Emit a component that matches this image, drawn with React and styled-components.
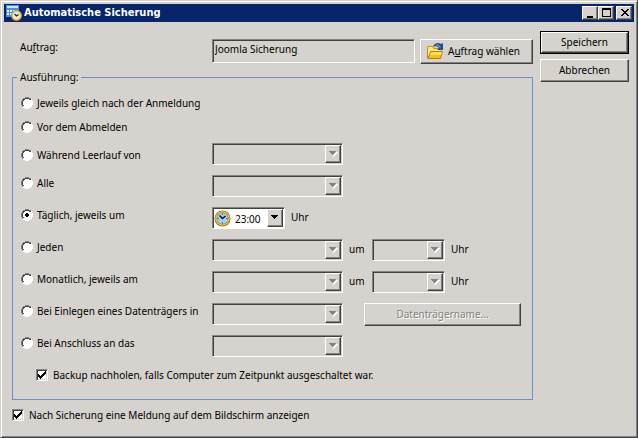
import { useId, useState } from "react"
import styled, { createGlobalStyle } from "styled-components"

const face = "#d6d3ce"
const shadow = "#848284"
const dark = "#424142"

const rows = [
  { id: "login", label: "Jeweils gleich nach der Anmeldung" },
  { id: "logout", label: "Vor dem Abmelden" },
  { id: "idle", label: "Während Leerlauf von", field: "list", first: true },
  { id: "every", label: "Alle", field: "list" },
  { id: "daily", label: "Täglich, jeweils um", field: "clock" },
  { id: "weekday", label: "Jeden", field: "list", time: true },
  { id: "monthly", label: "Monatlich, jeweils am", field: "list", time: true },
  { id: "insert", label: "Bei Einlegen eines Datenträgers in", field: "list", volume: true },
  { id: "connect", label: "Bei Anschluss an das", field: "list" },
]

const App = () => {
  const [mode, setMode] = useState("daily")

  return (
    <>
      <GlobalStyle />
      <Dialog role="dialog" aria-labelledby="dialog-title">
        <TitleBar>
          <ScheduleIcon />
          <Title id="dialog-title">Automatische Sicherung</Title>
          <CaptionButtons>
            <CaptionButton type="button" aria-label="Minimieren">
              <Glyph><path d="M3 9h6v2H3z" /></Glyph>
            </CaptionButton>
            <CaptionButton type="button" aria-label="Maximieren">
              <Glyph><path fillRule="evenodd" d="M2 1h9v9H2zM3 3v6h7V3z" /></Glyph>
            </CaptionButton>
            <CaptionButton type="button" aria-label="Schließen" $apart>
              <Glyph>
                <path d="M3 2h2v1H3zM9 2h2v1H9zM4 3h2v1H4zM8 3h2v1H8zM5 4h4v1H5zM6 5h2v1H6zM5 6h4v1H5zM4 7h2v1H4zM8 7h2v1H8zM3 8h2v1H3zM9 8h2v1H9z" />
              </Glyph>
            </CaptionButton>
          </CaptionButtons>
        </TitleBar>

        <Body>
          <Main>
            <JobRow>
              <JobLabel htmlFor="job">Au<u>f</u>trag:</JobLabel>
              <JobField id="job" type="text" readOnly value="Joomla Sicherung" />
              <JobButton type="button">
                <FolderIcon />
                <span>A<u>u</u>ftrag wählen</span>
              </JobButton>
            </JobRow>

            <Group>
              <Legend>Ausführung:</Legend>
              {rows.map((row) => (
                <Row key={row.id} $short={!row.field}>
                  <Option $first={row.first}>
                    <Radio
                      name="mode"
                      checked={mode === row.id}
                      onChange={() => setMode(row.id)}
                    />
                    <span>{row.label}</span>
                  </Option>
                  {row.field === "list" && <Combo label={row.label} disabled />}
                  {row.field === "clock" && (
                    <>
                      <Combo label="Uhrzeit" value="23:00" small />
                      <Unit>Uhr</Unit>
                    </>
                  )}
                  {row.time && (
                    <>
                      <Unit $wide>um</Unit>
                      <Combo label="Uhrzeit" disabled small />
                      <Unit>Uhr</Unit>
                    </>
                  )}
                  {row.volume && <VolumeButton type="button" disabled>Datenträgername...</VolumeButton>}
                </Row>
              ))}
              <CheckRow $inset>
                <Check />
                <span>Backup nachholen, falls Computer zum Zeitpunkt ausgeschaltet war.</span>
              </CheckRow>
            </Group>

            <CheckRow>
              <Check />
              <span>Nach Sicherung eine Meldung auf dem Bildschirm anzeigen</span>
            </CheckRow>
          </Main>

          <Actions>
            <DefaultFrame>
              <PushButton type="submit">Speichern</PushButton>
            </DefaultFrame>
            <PushButton type="button">Abbrechen</PushButton>
          </Actions>
        </Body>
      </Dialog>
    </>
  )
}

const Glyph = ({ children }) => (
  <svg width="12" height="12" viewBox="0 0 12 12" shapeRendering="crispEdges" aria-hidden="true">
    {children}
  </svg>
)

const Combo = ({ label, value, small, disabled }) => {
  const id = useId()
  return (
    <ComboFrame $small={small} $disabled={disabled}>
      {value && <ComboIcon><ClockIcon /></ComboIcon>}
      <ComboSelect id={id} aria-label={label} disabled={disabled} $icon={!!value}>
        <option>{value}</option>
      </ComboSelect>
      <ComboArrow aria-hidden="true">
        <svg width="9" height="6" viewBox="0 0 9 6" shapeRendering="crispEdges">
          {disabled && <path fill="#fff" d="M7 1h2v1H8v1H7v1H6v1H5v1H4V4z" />}
          <path fill={disabled ? shadow : "#000"} d="M0 0h7v1H6v1H5v1H4v1H3V3H2V2H1V1H0z" />
        </svg>
      </ComboArrow>
    </ComboFrame>
  )
}

const Radio = ({ checked, ...rest }) => (
  <Tick>
    <BareInput type="radio" checked={checked} {...rest} />
    <svg width="12" height="12" viewBox="0 0 12 12" shapeRendering="crispEdges" aria-hidden="true">
      <path fill="#fff" d="M4 1h4v1h2v2h1v4h-1v2H8v1H4v-1H2V8H1V4h1V2h2z" />
      <path fill={shadow} d="M4 0h4v1H4zM2 1h2v1H2zM8 1h2v1H8zM1 2h1v2H1zM0 4h1v4H0zM1 8h1v2H1z" />
      <path fill={dark} d="M4 1h4v1H4zM2 2h2v1H2zM8 2h2v1H8zM2 3h1v1H2zM1 4h1v4H1zM2 8h1v1H2z" />
      <path fill="#fff" d="M10 2h1v2h-1zM11 4h1v4h-1zM10 8h1v2h-1zM8 10h2v1H8zM4 11h4v1H4zM2 10h2v1H2z" />
      {checked && <path d="M5 4h2v1h1v2H7v1H5V7H4V5h1z" />}
    </svg>
  </Tick>
)

const Check = () => {
  const [on, setOn] = useState(true)
  return (
    <Tick $box>
      <BareInput type="checkbox" checked={on} onChange={() => setOn(!on)} />
      {on && (
        <svg width="8" height="8" viewBox="0 0 8 8" shapeRendering="crispEdges" aria-hidden="true">
          <path d="M7 0h1v3H7v1H6v1H5v1H4v1H3v1H2V7H1V6H0V3h1v1h1v1h1V4h1V3h1V2h1V1h1z" />
        </svg>
      )}
    </Tick>
  )
}

const ClockIcon = () => (
  <svg width="17" height="17" viewBox="0 0 17 17" aria-hidden="true">
    <circle cx="8.5" cy="8.5" r="8" fill="#a5712a" />
    <circle cx="8.5" cy="8.5" r="7.2" fill="#f7c331" />
    <circle cx="8.5" cy="8.5" r="5.9" fill="#8c7a45" />
    <circle cx="8.5" cy="8.5" r="5.4" fill="#a5d3f7" />
    <path fill="#4a7dbd" d="M8 3h1v2H8zM8 12h1v2H8zM3 8h2v1H3zM12 8h2v1h-2z" />
    <path d="M5.5 5.5l3 3 3-2.500" fill="none" stroke="#101828" strokeWidth="1.600" />
  </svg>
)

const ScheduleIcon = () => (
  <svg width="16" height="16" viewBox="0 0 16 16" aria-hidden="true">
    <path fill="#4a8ee7" d="M0 0h13v12H0z" />
    <path fill="#c6e3ff" d="M1 1h11v2H1z" />
    <path fill="#e7f3ff" d="M1 5h2v2H1zM4 5h2v2H4zM7 5h2v2H7zM10 5h2v2h-2zM1 8h2v2H1zM4 8h2v2H4z" />
    <circle cx="10.500" cy="10.500" r="5.500" fill="#a5712a" />
    <circle cx="10.500" cy="10.500" r="4.900" fill="#ffc331" />
    <circle cx="10.500" cy="10.500" r="3.500" fill="#dfeff7" />
    <path d="M8.500 9l2 2 2-1.500" fill="none" stroke="#18284a" strokeWidth="1.300" />
  </svg>
)

const FolderIcon = () => (
  <svg width="16" height="16" viewBox="0 0 16 16" aria-hidden="true">
    <path fill="#c69218" d="M0 4l1-1h4l2 2h6v9l-1 2H1l-1-1z" />
    <path fill="#ffe77b" d="M1 4h4l2 2h6v3H4l-3 5z" />
    <path fill="#fbbd18" stroke="#b57d10" d="M1 15.500L3.500 8.500h12l-2 7z" />
    <path fill="#ffe25a" d="M4 9h11l-1 3H3z" />
    <path fill="#28498c" d="M6 4c1-4 5-5 8-3l2-1v7h-6l2-2c-2-2-4-2-6-1z" />
    <path fill="#5a8ece" d="M8 2c2-1 3-1 5 1l1 1-1 1c-2-2-3-2-5-3z" />
  </svg>
)

const GlobalStyle = createGlobalStyle`
  * {
    box-sizing: border-box;
  }
  body {
    margin: 0;
    background: ${face};
  }
  body, button, input, select {
    font-family: "Noto Sans", Tahoma, sans-serif;
    font-size: 10px;
    line-height: 16px;
    color: #000;
  }
`

const Dialog = styled.main`
  min-height: 100vh;
  padding: 2px;
  background: ${face};
  border: 1px solid;
  border-color: ${face} ${dark} ${dark} ${face};
  box-shadow: inset 1px 1px #fff, inset -1px -1px ${shadow};
`

const TitleBar = styled.header`
  display: flex;
  align-items: center;
  gap: 2px;
  height: 18px;
  margin: 1px;
  padding: 0 2px;
  background: #08246b;
`

const Title = styled.h1`
  flex: 1;
  margin: 0;
  font-family: "DejaVu Sans Condensed", "DejaVu Sans", sans-serif;
  font-size: 11px;
  line-height: 16px;
  color: #fff;
`

const CaptionButtons = styled.div`
  display: flex;
`

const CaptionButton = styled.button`
  display: flex;
  width: 16px;
  height: 14px;
  margin-left: ${({ $apart }) => ($apart ? "2px" : "0")};
  padding: 0 0 0 1px;
  background: ${face};
  border: 1px solid;
  border-color: #fff ${dark} ${dark} #fff;
  box-shadow: inset -1px -1px ${shadow};
`

const Body = styled.div`
  display: flex;
  gap: 7px;
  padding: 8px 6px 10px 9px;
`

const Main = styled.div`
  flex: 1;
`

const JobRow = styled.div`
  display: flex;
  align-items: flex-start;
  padding: 8px 0 5px 8px;
`

const JobLabel = styled.label`
  width: 192px;
`

const JobField = styled.input`
  flex: 1;
  min-width: 0;
  height: 24px;
  margin-right: 5px;
  padding: 0 2px 4px;
  background: ${face};
  border: 1px solid;
  border-color: ${shadow} #fff #fff ${shadow};
  border-radius: 0;
  box-shadow: inset 1px 1px ${dark};
  outline: none;
`

const PushButton = styled.button`
  display: flex;
  align-items: center;
  justify-content: center;
  width: 100%;
  height: 23px;
  padding: 0 0 1px;
  background: ${face};
  border: 1px solid;
  border-color: #fff ${dark} ${dark} #fff;
  box-shadow: inset -1px -1px ${shadow};

  &:disabled {
    color: ${shadow};
    text-shadow: 1px 1px #fff;
  }
`

const JobButton = styled(PushButton)`
  justify-content: flex-start;
  gap: 5px;
  width: 113px;
  height: 25px;
  padding-left: 6px;
`

const VolumeButton = styled(PushButton)`
  width: 157px;
  margin-left: 21px;
`

const Group = styled.fieldset`
  min-width: 0;
  margin: 0 0 7px;
  padding: 10px 8px 16px;
  border: 1px solid #6392ce;
`

const Legend = styled.legend`
  margin-left: -4px;
  padding: 0 3px;
  line-height: 16px;
  height: 16px;
`

const Row = styled.div`
  display: flex;
  align-items: flex-start;
  height: ${({ $short }) => ($short ? "24px" : "32px")};
`

const Option = styled.label`
  display: flex;
  align-items: center;
  gap: 4px;
  width: 191px;
  height: ${({ $first }) => ($first ? "24px" : "16px")};
  white-space: nowrap;
`

const Unit = styled.span`
  width: ${({ $wide }) => ($wide ? "29px" : "auto")};
  padding: 2px 0 0 6px;
`

const Tick = styled.span`
  display: grid;
  place-items: center;
  width: 12px;
  height: 12px;

  > * {
    grid-area: 1 / 1;
  }
  svg {
    pointer-events: none;
  }

  ${({ $box }) => $box && `
    background: #fff;
    border: 1px solid;
    border-color: ${shadow} #fff #fff ${shadow};
    box-shadow: inset 1px 1px ${dark}, inset -1px -1px ${face};
  `}
`

const BareInput = styled.input`
  appearance: none;
  width: 100%;
  height: 100%;
  margin: 0;
`

const CheckRow = styled.label`
  display: flex;
  align-items: center;
  gap: 5px;
  margin-left: ${({ $inset }) => ($inset ? "15px" : "0")};
`

const ComboFrame = styled.span`
  display: grid;
  width: ${({ $small }) => ($small ? "73px" : "131px")};
  height: 22px;
  padding: 1px;
  background: ${({ $disabled }) => ($disabled ? face : "#fff")};
  border: 1px solid;
  border-color: ${shadow} #fff #fff ${shadow};
  box-shadow: inset 1px 1px ${dark};

  > * {
    grid-area: 1 / 1;
  }
`

const ComboSelect = styled.select`
  appearance: none;
  width: 100%;
  height: 18px;
  padding: 1px 0 0 ${({ $icon }) => ($icon ? "21px" : "2px")};
  background: none;
  border: 0;
  outline: none;
`

const ComboIcon = styled.span`
  display: flex;
  align-items: center;
  pointer-events: none;
`

const ComboArrow = styled.span`
  display: flex;
  align-items: center;
  justify-content: center;
  justify-self: end;
  width: 16px;
  height: 18px;
  background: ${face};
  border: 1px solid;
  border-color: #fff ${dark} ${dark} #fff;
  box-shadow: inset -1px -1px ${shadow};
  pointer-events: none;
`

const Actions = styled.div`
  display: flex;
  flex-direction: column;
  gap: 5px;
  width: 89px;
`

const DefaultFrame = styled.div`
  display: flex;
  border: 1px solid #000;

  > button {
    height: 21px;
  }
`

export default App
